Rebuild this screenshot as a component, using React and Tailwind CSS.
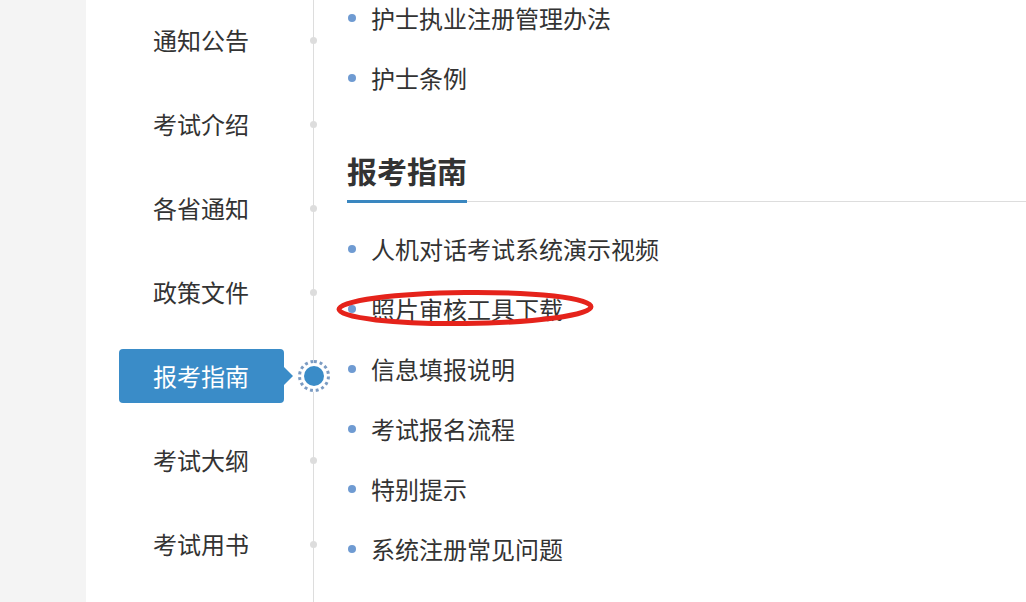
import React from "react";

const menu = ["通知公告", "考试介绍", "各省通知", "政策文件", "报考指南", "考试大纲", "考试用书"];
const topItems = ["护士执业注册管理办法", "护士条例"];
const guideItems = ["人机对话考试系统演示视频", "照片审核工具下载", "信息填报说明", "考试报名流程", "特别提示", "系统注册常见问题"];

function Item({ text, circled }) {
  return (
    <div className="relative flex h-[60px] items-center">
      <span className="ml-px h-[8px] w-[8px] shrink-0 rounded-full bg-[#6f9bd2]" />
      <span className="ml-[15px] text-[24px] leading-[30px] text-[#333]">{text}</span>
      {circled && (
        <svg
          className="pointer-events-none absolute left-[-12px] top-[10px]"
          width="262"
          height="42"
          viewBox="0 0 262 42"
        >
          <ellipse
            cx="130"
            cy="19"
            rx="126"
            ry="15.5"
            fill="none"
            stroke="#e5231b"
            strokeWidth="5"
            transform="rotate(-0.6 130 19)"
          />
        </svg>
      )}
    </div>
  );
}

export default function App() {
  return (
    <div
      className="flex h-[602px] w-[1026px] overflow-hidden bg-white"
      style={{ fontFamily: '"Microsoft YaHei", "Noto Sans CJK SC", "Noto Sans", sans-serif' }}
    >
      <div className="w-[86px] shrink-0 bg-[#f4f4f4]" />
      <div className="relative flex w-[228px] shrink-0 flex-col border-r border-[#dddddd]">
        <div className="-mt-[2px] flex flex-col">
          {menu.map((m) => {
            const active = m === "报考指南";
            return (
              <div key={m} className="relative flex h-[84px] items-center">
                {active ? (
                  <>
                    <div className="relative ml-[33px] flex h-[54px] w-[165px] items-center rounded-[4px] bg-[#3a8cc8] pl-[34px] text-[24px] text-white">
                      {m}
                      <span className="absolute right-[-9px] top-[18px] h-0 w-0 border-y-[9px] border-l-[9px] border-y-transparent border-l-[#3a8cc8]" />
                    </div>
                    <span className="absolute right-[-17px] top-[26px] flex h-[32px] w-[32px] items-center justify-center rounded-full border-[3px] border-dotted border-[#7b9bc2] bg-white">
                      <span className="h-[20px] w-[20px] rounded-full bg-[#3a8cc8]" />
                    </span>
                  </>
                ) : (
                  <>
                    <span className="ml-[67px] text-[24px] text-[#333]">{m}</span>
                    <span className="absolute right-[-4px] top-[39px] h-[7px] w-[7px] rounded-full bg-[#dddddd]" />
                  </>
                )}
              </div>
            );
          })}
        </div>
      </div>
      <div className="flex flex-1 flex-col pl-[33px]">
        <div className="-mt-[12px] flex flex-col">
          {topItems.map((t) => (
            <Item key={t} text={t} />
          ))}
        </div>
        <div className="mt-[42px] flex items-end">
          <span className="border-b-[3px] border-[#3a87c0] pb-[10px] text-[30px] font-bold leading-[40px] text-[#333]">
            报考指南
          </span>
          <span className="mb-px flex-1 border-b border-[#dddddd]" />
        </div>
        <div className="mt-[16px] flex flex-col">
          {guideItems.map((t) => (
            <Item key={t} text={t} circled={t === "照片审核工具下载"} />
          ))}
        </div>
      </div>
    </div>
  );
}
